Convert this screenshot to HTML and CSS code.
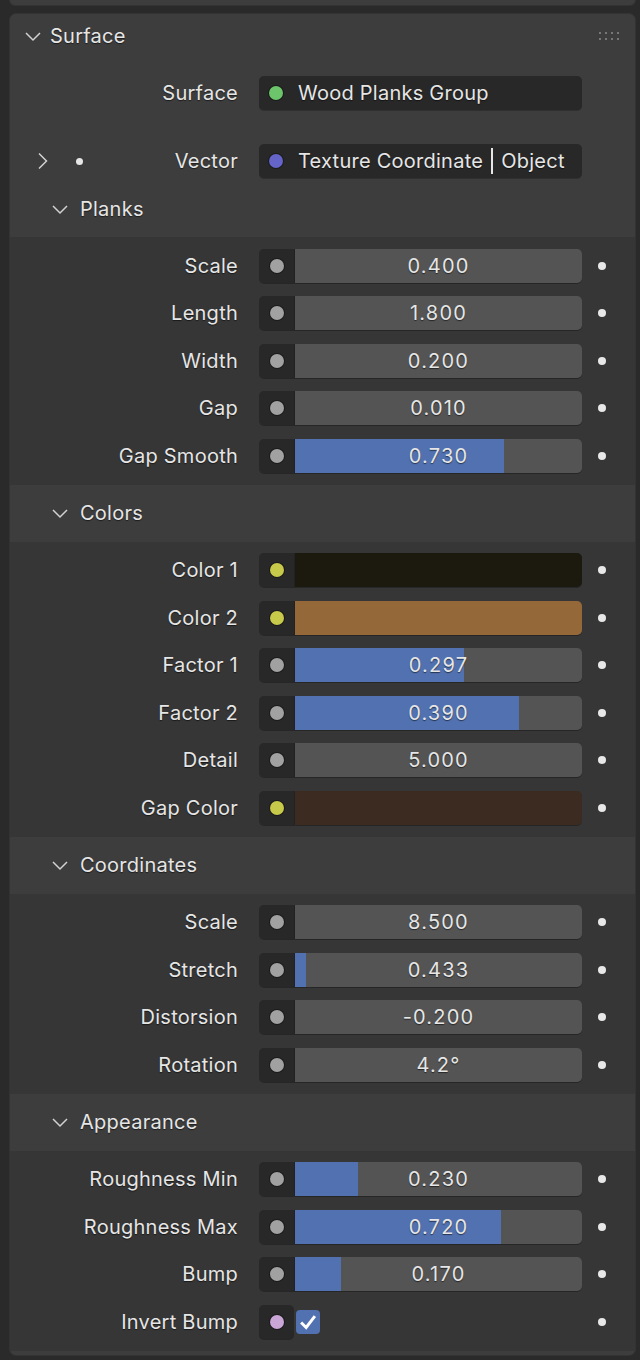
FILE: index.html
```html
<!DOCTYPE html>
<html lang="en">
<head>
    <meta charset="UTF-8">
    <meta name="viewport" content="width=device-width, initial-scale=1.0">
    <title>Surface</title>
    <link rel="stylesheet" href="styles.css">
</head>
<body>
    <div class="top-stub"></div>

    <div class="panel">
        <div class="panel-header">
            <svg class="chev" viewBox="0 0 18 18"><polyline points="2,6 9,13 16,6"/></svg>
            <span class="panel-title">Surface</span>
            <span class="grip">
                <i></i><i></i><i></i><i></i><i></i><i></i><i></i><i></i>
            </span>
        </div>

        <div class="links">
            <div class="row link-row">
                <div class="label">Surface</div>
                <div class="link-field"><span class="sock green"></span>Wood Planks Group</div>
            </div>
            <div class="row link-row vector-row">
                <div class="label">
                    <svg class="chev-right" viewBox="0 0 18 18"><polyline points="5,1.5 12.5,9 5,16.5"/></svg>
                    <span class="small-dot"></span>
                    <span class="label-text">Vector</span>
                </div>
                <div class="link-field"><span class="sock purple"></span>Texture Coordinate <span class="bar"></span> Object</div>
            </div>
        </div>

        <!-- Planks -->
        <div class="sub-header">
            <svg class="chev" viewBox="0 0 18 18"><polyline points="2,6 9,13 16,6"/></svg>
            <span>Planks</span>
        </div>
        <div class="sub-body">
            <div class="row"><div class="label">Scale</div><div class="field"><span class="sock-box"><span class="sock grey"></span></span><div class="slider"><span class="value">0.400</span></div></div><span class="dot"></span></div>
            <div class="row"><div class="label">Length</div><div class="field"><span class="sock-box"><span class="sock grey"></span></span><div class="slider"><span class="value">1.800</span></div></div><span class="dot"></span></div>
            <div class="row"><div class="label">Width</div><div class="field"><span class="sock-box"><span class="sock grey"></span></span><div class="slider"><span class="value">0.200</span></div></div><span class="dot"></span></div>
            <div class="row"><div class="label">Gap</div><div class="field"><span class="sock-box"><span class="sock grey"></span></span><div class="slider"><span class="value">0.010</span></div></div><span class="dot"></span></div>
            <div class="row"><div class="label">Gap Smooth</div><div class="field"><span class="sock-box"><span class="sock grey"></span></span><div class="slider"><span class="fill" style="width: 72.8%;"></span><span class="value">0.730</span></div></div><span class="dot"></span></div>
        </div>

        <!-- Colors -->
        <div class="sub-header">
            <svg class="chev" viewBox="0 0 18 18"><polyline points="2,6 9,13 16,6"/></svg>
            <span>Colors</span>
        </div>
        <div class="sub-body colors">
            <div class="row"><div class="label">Color 1</div><div class="field"><span class="sock-box"><span class="sock yellow"></span></span><div class="swatch swatch-dark"></div></div><span class="dot"></span></div>
            <div class="row"><div class="label">Color 2</div><div class="field"><span class="sock-box"><span class="sock yellow"></span></span><div class="swatch swatch-wood"></div></div><span class="dot"></span></div>
            <div class="row"><div class="label">Factor 1</div><div class="field"><span class="sock-box"><span class="sock grey"></span></span><div class="slider"><span class="fill" style="width: 58.8%;"></span><span class="value">0.297</span></div></div><span class="dot"></span></div>
            <div class="row"><div class="label">Factor 2</div><div class="field"><span class="sock-box"><span class="sock grey"></span></span><div class="slider"><span class="fill" style="width: 77.9%;"></span><span class="value">0.390</span></div></div><span class="dot"></span></div>
            <div class="row"><div class="label">Detail</div><div class="field"><span class="sock-box"><span class="sock grey"></span></span><div class="slider"><span class="value">5.000</span></div></div><span class="dot"></span></div>
            <div class="row"><div class="label">Gap Color</div><div class="field"><span class="sock-box"><span class="sock yellow"></span></span><div class="swatch swatch-gap"></div></div><span class="dot"></span></div>
        </div>

        <!-- Coordinates -->
        <div class="sub-header">
            <svg class="chev" viewBox="0 0 18 18"><polyline points="2,6 9,13 16,6"/></svg>
            <span>Coordinates</span>
        </div>
        <div class="sub-body">
            <div class="row"><div class="label">Scale</div><div class="field"><span class="sock-box"><span class="sock grey"></span></span><div class="slider"><span class="value">8.500</span></div></div><span class="dot"></span></div>
            <div class="row"><div class="label">Stretch</div><div class="field"><span class="sock-box"><span class="sock grey"></span></span><div class="slider"><span class="fill" style="width: 3.7%;"></span><span class="value">0.433</span></div></div><span class="dot"></span></div>
            <div class="row"><div class="label">Distorsion</div><div class="field"><span class="sock-box"><span class="sock grey"></span></span><div class="slider"><span class="value">-0.200</span></div></div><span class="dot"></span></div>
            <div class="row"><div class="label">Rotation</div><div class="field"><span class="sock-box"><span class="sock grey"></span></span><div class="slider"><span class="value">4.2°</span></div></div><span class="dot"></span></div>
        </div>

        <!-- Appearance -->
        <div class="sub-header">
            <svg class="chev" viewBox="0 0 18 18"><polyline points="2,6 9,13 16,6"/></svg>
            <span>Appearance</span>
        </div>
        <div class="sub-body">
            <div class="row"><div class="label">Roughness Min</div><div class="field"><span class="sock-box"><span class="sock grey"></span></span><div class="slider"><span class="fill" style="width: 21.8%;"></span><span class="value">0.230</span></div></div><span class="dot"></span></div>
            <div class="row"><div class="label">Roughness Max</div><div class="field"><span class="sock-box"><span class="sock grey"></span></span><div class="slider"><span class="fill" style="width: 71.7%;"></span><span class="value">0.720</span></div></div><span class="dot"></span></div>
            <div class="row"><div class="label">Bump</div><div class="field"><span class="sock-box"><span class="sock grey"></span></span><div class="slider"><span class="fill" style="width: 15.9%;"></span><span class="value">0.170</span></div></div><span class="dot"></span></div>
            <div class="row">
                <div class="label">Invert Bump</div>
                <div class="check-field">
                    <span class="sock-box alone"><span class="sock pink"></span></span>
                    <span class="checkbox">
                        <svg viewBox="0 0 24 24"><polyline points="4.5,12.5 10,18 19.5,5.5"/></svg>
                    </span>
                </div>
                <span class="dot"></span>
            </div>
        </div>
    </div>
</body>
</html>
```

FILE: styles.css
```css
body {
    margin: 0;
    background-color: #2a2a2a;
    font-family: Inter, "Noto Sans", sans-serif;
    font-size: 20px;
    letter-spacing: 0.25px;
    color: #e6e6e6;
    text-shadow: 0 1px 1px rgba(0, 0, 0, 0.55);
}
.top-stub {
    height: 5px;
    margin: 0 4px 0 9px;
    background-color: #3d3d3d;
    border: 1px solid #333;
    border-top: none;
    border-radius: 0 0 6px 6px;
}
.panel {
    margin: 7px 4px 0 9px;
    background-color: #3d3d3d;
    border: 1px solid #333;
    border-radius: 7px;
    overflow: hidden;
    padding-bottom: 4px;
}
.panel-header {
    height: 44px;
    display: flex;
    align-items: center;
    padding-left: 14px;
}
.chev {
    width: 18px;
    height: 18px;
    fill: none;
    stroke: #d2d2d2;
    stroke-width: 1.5;
}
.panel-title {
    margin-left: 8px;
}
.grip {
    margin-left: auto;
    margin-right: 16px;
    display: grid;
    grid-template-columns: repeat(4, 2px);
    column-gap: 4px;
    row-gap: 4px;
}
.grip i {
    width: 2px;
    height: 2px;
    background-color: #777;
}

/* linked sockets */
.links {
    padding: 18px 0 2px;
}
.row {
    display: grid;
    grid-template-columns: 249px 323px 1fr;
    align-items: center;
    height: 47.5px;
}
.link-row {
    height: 34px;
}
.link-row + .link-row {
    margin-top: 34px;
}
.label {
    text-align: right;
    white-space: nowrap;
    padding-right: 21px;
}
.vector-row .label {
    display: flex;
    align-items: center;
    padding-left: 24px;
}
.vector-row .label-text {
    margin-left: auto;
}
.chev-right {
    width: 18px;
    height: 18px;
    fill: none;
    stroke: #d2d2d2;
    stroke-width: 1.5;
}
.small-dot {
    width: 7px;
    height: 7px;
    border-radius: 50%;
    background-color: #e6e6e6;
    margin-left: 24px;
}
.link-field {
    height: 34px;
    display: flex;
    align-items: center;
    background-color: #282828;
    border-radius: 5px;
    box-shadow: 0 1px 0 #2f2f2f;
    padding-left: 10px;
    white-space: nowrap;
}
.link-field .sock {
    margin-right: 15px;
}
.bar {
    display: inline-block;
    width: 2px;
    height: 26px;
    background-color: #e6e6e6;
    margin: 0 8px;
}

/* sub panels */
.sub-header {
    height: 57px;
    display: flex;
    align-items: center;
    padding-left: 41px;
}
.sub-header span {
    margin-left: 11px;
}
.sub-body {
    background-color: #363636;
    padding: 5px 0;
}

/* fields */
.field {
    height: 34px;
    display: flex;
    border-radius: 5px;
    overflow: hidden;
    box-shadow: 0 1px 0 #262626;
}
.sock-box {
    width: 35px;
    flex: none;
    display: flex;
    align-items: center;
    justify-content: center;
    background-color: #282828;
    border-right: 1px solid #222;
}
.sock {
    display: inline-block;
    width: 14px;
    height: 14px;
    border-radius: 50%;
    flex: none;
    box-shadow: 0 0 0 1px rgba(0, 0, 0, 0.35);
}
.grey { background-color: #a1a1a1; }
.green { background-color: #6cc46b; }
.purple { background-color: #6464c9; }
.yellow { background-color: #c7c94b; }
.pink { background-color: #c9a6d6; }

.slider {
    position: relative;
    flex: 1;
    background-color: #545454;
    display: flex;
    align-items: center;
    justify-content: center;
}
.fill {
    position: absolute;
    left: 0;
    top: 0;
    bottom: 0;
    background-color: #5171b0;
}
.value {
    position: relative;
    letter-spacing: 1.2px;
}
.swatch {
    flex: 1;
}
.swatch-dark { background-color: #1c1a0e; }
.swatch-wood { background-color: #95683a; }
.swatch-gap { background-color: #3c2b20; }

.dot {
    width: 8px;
    height: 8px;
    border-radius: 50%;
    background-color: #e8e8e8;
    margin-left: 16px;
}

.check-field {
    display: flex;
    align-items: center;
    gap: 2px;
}
.sock-box.alone {
    height: 34px;
    border-radius: 5px;
    border-right: none;
    box-shadow: 0 1px 0 #262626;
}
.checkbox {
    width: 24px;
    height: 24px;
    border-radius: 4px;
    background-color: #5171b0;
    display: flex;
    align-items: center;
    justify-content: center;
}
.checkbox svg {
    width: 22px;
    height: 22px;
    fill: none;
    stroke: #fff;
    stroke-width: 3.2;
}
```
